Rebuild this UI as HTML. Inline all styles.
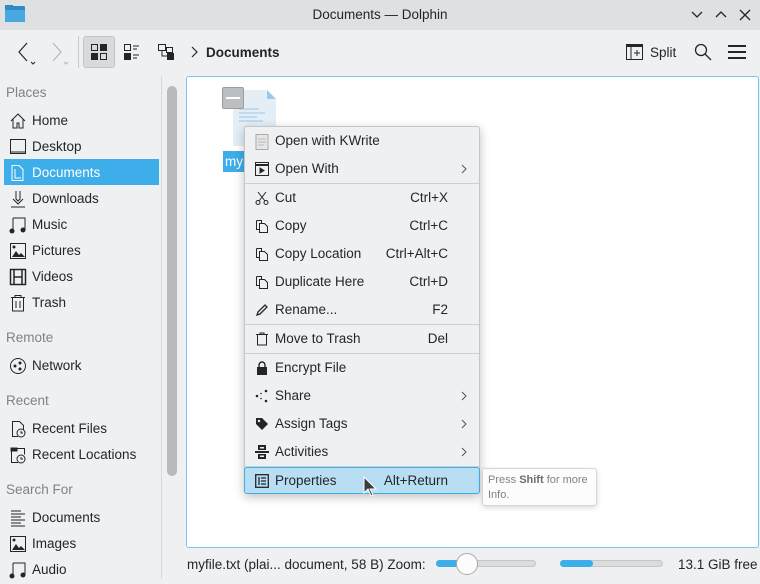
<!DOCTYPE html>
<html><head><meta charset="utf-8"><style>
*{margin:0;padding:0;box-sizing:border-box}
body{width:760px;height:579px;overflow:hidden;background:#eff0f1;font-family:"Liberation Sans","DejaVu Sans",sans-serif;font-size:13.5px;color:#232629;position:relative}
.a{position:absolute;white-space:nowrap}
.t{position:absolute;left:0;top:0;width:760px;height:30px;background:#dee0e2}
.lbl{color:#7f8386}
.si{position:absolute;left:4px;width:155px;height:26px;line-height:28px;padding-left:28px}
.si svg{position:absolute;left:5px;top:5px}
.menu{position:absolute;left:244px;top:126px;width:236px;height:368px;background:#eff0f1;border:1px solid #c4c6c8;border-radius:3px;box-shadow:0 3px 10px rgba(0,0,0,.25)}
.mi{position:absolute;left:0;width:234px;height:28px;line-height:28px;padding-left:30px}
.mi .k{position:absolute;right:31px;top:0}
.mi .ar{position:absolute;right:12px;top:9px;left:auto}
.mi svg{position:absolute;left:10px;top:7px}
.sep{position:absolute;left:0;width:234px;height:1px;background:#cdd0d2}
</style></head><body>
<div class="t"></div>
<svg class="a" style="left:5px;top:5px" width="20" height="18"><rect x="0" y="1" width="20" height="16" rx="1.5" fill="#2e8bc6"/><rect x="0" y="5" width="20" height="12" fill="#4aa8e0"/><rect x="0" y="0" width="8" height="3" fill="#2e8bc6"/></svg>
<div class="a" style="left:0;width:760px;top:7px;text-align:center;font-size:13.5px">Documents — Dolphin</div>
<svg class="a" style="left:690px;top:8px" width="66" height="14" fill="none" stroke="#232629" stroke-width="1.3"><path d="M2 4l5 5 5-5M26 9l5-5 5 5M50 2l10 10M60 2L50 12"/></svg>
<svg class="a" style="left:15px;top:40px" width="60" height="28" fill="none" stroke="#232629" stroke-width="1.2"><path d="M12 3l-8 9 8 9"/><path d="M16 22l2 2 2-2" stroke-width="1"/><path d="M38 3l8 9-8 9" stroke="#b5b7b9"/><path d="M49 22l2 2 2-2" stroke="#b5b7b9" stroke-width="1"/></svg>
<div class="a" style="left:78px;top:36px;width:1px;height:32px;background:#c7c9cb"></div>
<div class="a" style="left:83px;top:36px;width:32px;height:32px;background:#d8dadc;border:1px solid #c2c4c6;border-radius:3px"></div>
<svg class="a" style="left:91px;top:44px" width="16" height="16"><rect x="0.5" y="0.5" width="6" height="6" fill="none" stroke="#232629"/><rect x="9" y="0" width="7" height="7" fill="#232629"/><rect x="0" y="9" width="7" height="7" fill="#232629"/><rect x="9.5" y="9.5" width="6" height="6" fill="none" stroke="#232629"/></svg>
<svg class="a" style="left:124px;top:44px" width="16" height="16"><rect x="0.5" y="0.5" width="6" height="6" fill="none" stroke="#232629"/><rect x="0" y="9" width="7" height="7" fill="#232629"/><path d="M9 2h6M9 5h4M9 11h6M9 14h4" stroke="#232629"/></svg>
<svg class="a" style="left:158px;top:44px" width="18" height="16"><rect x="0.5" y="0.5" width="7" height="6" fill="none" stroke="#232629"/><rect x="8.5" y="3.5" width="6" height="5" fill="none" stroke="#232629"/><rect x="9" y="9" width="7" height="7" fill="#232629"/><path d="M4 7v5h5" stroke="#232629" fill="none"/></svg>
<svg class="a" style="left:190px;top:46px" width="8" height="12" fill="none" stroke="#232629" stroke-width="1.2"><path d="M2 1l5 5-5 5"/></svg>
<div class="a" style="left:206px;top:45px;font-weight:bold">Documents</div>
<svg class="a" style="left:626px;top:44px" width="17" height="16" fill="none" stroke="#232629"><rect x="0.5" y="0.5" width="16" height="15"/><rect x="0" y="0" width="17" height="3" fill="#232629" stroke="none"/><path d="M5 3v13M8 9h6M11 6v6"/></svg>
<div class="a" style="left:650px;top:45px">Split</div>
<svg class="a" style="left:694px;top:43px" width="18" height="18" fill="none" stroke="#232629" stroke-width="1.3"><circle cx="7" cy="7" r="5.5"/><path d="M11 11l6 6"/></svg>
<svg class="a" style="left:728px;top:45px" width="18" height="14" fill="#232629"><rect y="0" width="18" height="2"/><rect y="6" width="18" height="2"/><rect y="12" width="18" height="2"/></svg>
<div class="a lbl" style="left:6px;top:85px">Places</div>
<div class="si" style="top:107px"><svg width="18" height="18" fill="none" stroke="#232629"><path d="M2 9L9 2l7 7M4 7v9h4v-5h2v5h4V7"/></svg>Home</div>
<div class="si" style="top:133px"><svg width="18" height="18" fill="none" stroke="#232629"><rect x="1.5" y="1.5" width="15" height="14"/><path d="M1 14h16"/></svg>Desktop</div>
<div class="si" style="top:159px;background:#3daee9;color:#fff"><svg width="18" height="18" fill="none" stroke="#fff"><path d="M3 1.5h7l4 4v11H3z M6 5v9h6"/></svg>Documents</div>
<div class="si" style="top:185px"><svg width="18" height="18" fill="none" stroke="#232629"><path d="M7 1v8l2 2 2-2V1M4 9l5 5 5-5M2 17h14"/></svg>Downloads</div>
<div class="si" style="top:211px"><svg width="18" height="18" fill="#232629"><path d="M4 2h12v12" fill="none" stroke="#232629"/><path d="M4 2v12" stroke="#232629"/><circle cx="3" cy="15" r="2.5"/><circle cx="14" cy="14" r="2.5"/></svg>Music</div>
<div class="si" style="top:237px"><svg width="18" height="18"><rect x="1.5" y="1.5" width="15" height="15" fill="none" stroke="#232629"/><path d="M3 15l4-6 3 4 2-2 4 4z" fill="#232629"/><circle cx="5" cy="5" r="1.5" fill="#232629"/></svg>Pictures</div>
<div class="si" style="top:263px"><svg width="18" height="18" fill="none" stroke="#232629" stroke-width="1.5"><rect x="1.5" y="1.5" width="15" height="15"/><path d="M5 1v16M13 1v16M5 9h8"/></svg>Videos</div>
<div class="si" style="top:289px"><svg width="18" height="18" fill="none" stroke="#232629"><path d="M2 3.5h14M6 3.5V1.5h6v2M3.5 4v13h11V4M7 7v7M11 7v7"/></svg>Trash</div>
<div class="a lbl" style="left:6px;top:330px">Remote</div>
<div class="si" style="top:352px"><svg width="18" height="18" fill="none" stroke="#232629"><circle cx="9" cy="9" r="7.5"/><circle cx="6" cy="9" r="1" fill="#232629"/><circle cx="11" cy="6" r="1" fill="#232629"/><circle cx="11" cy="12" r="1" fill="#232629"/></svg>Network</div>
<div class="a lbl" style="left:6px;top:393px">Recent</div>
<div class="si" style="top:415px"><svg width="18" height="18" fill="none" stroke="#232629"><path d="M9 16.5H3.5v-15h7l4 4v4"/><circle cx="12" cy="13" r="4"/><path d="M12 11v2h2"/></svg>Recent Files</div>
<div class="si" style="top:441px"><svg width="18" height="18" fill="none" stroke="#232629"><path d="M9 16.5H2.5v-14h13v6"/><rect x="2" y="2" width="6" height="3" fill="#232629"/><circle cx="12" cy="13" r="4"/><path d="M12 11v2h2"/></svg>Recent Locations</div>
<div class="a lbl" style="left:6px;top:482px">Search For</div>
<div class="si" style="top:504px"><svg width="18" height="18" stroke="#232629"><path d="M2 2h10M2 5h14M2 8h10M2 11h14M2 14h10M2 17h14"/></svg>Documents</div>
<div class="si" style="top:530px"><svg width="18" height="18"><rect x="1.5" y="1.5" width="15" height="15" fill="none" stroke="#232629"/><path d="M3 15l4-6 3 4 2-2 4 4z" fill="#232629"/><circle cx="5" cy="5" r="1.5" fill="#232629"/></svg>Images</div>
<div class="si" style="top:556px"><svg width="18" height="18" fill="#232629"><path d="M4 2h12v12" fill="none" stroke="#232629"/><path d="M4 2v12" stroke="#232629"/><circle cx="3" cy="15" r="2.5"/><circle cx="14" cy="14" r="2.5"/></svg>Audio</div>
<div class="a" style="left:161px;top:76px;width:1px;height:503px;background:#d6d8da"></div>
<div class="a" style="left:167px;top:86px;width:10px;height:390px;background:#b8babc;border-radius:5px"></div>
<div class="a" style="left:186px;top:76px;width:573px;height:472px;background:#fff;border:1px solid #7fc4e6;border-radius:3px"></div>
<svg class="a" style="left:229px;top:89px" width="48" height="58"><path d="M4 1h34l9 9v47H4z" fill="#e4eef6"/><path d="M38 1l9 9h-9z" fill="#9ccbea"/><path d="M10 20h20M10 24h26M10 28h18M10 32h24" stroke="#9fc5e4"/></svg>
<div class="a" style="left:222px;top:87px;width:22px;height:22px;background:#bcbfc1;border:1px solid #9a9da0;border-radius:2px"></div>
<div class="a" style="left:226px;top:97px;width:14px;height:2px;background:#fff"></div>
<div class="a" style="left:223px;top:151px;width:24px;height:21px;background:#3daee9;color:#fff;line-height:22px;padding-left:2px">my</div>
<div class="menu">
<div class="mi" style="top:0"><svg width="14" height="16"><rect x="1" y="0.5" width="12" height="15" fill="#e6e6e6" stroke="#aaa"/><path d="M3 5h8M3 8h8M3 11h6" stroke="#bbb"/></svg>Open with KWrite</div>
<div class="mi" style="top:28px"><svg width="14" height="14" fill="none" stroke="#232629"><rect x="0.5" y="0.5" width="13" height="13"/><path d="M0 3h14" stroke-width="2"/><path d="M5 6l4 2.5-4 2.5z" fill="#232629"/></svg>Open With<svg class="ar" width="6" height="10" fill="none" stroke="#555"><path d="M1 1l4 4-4 4"/></svg></div>
<div class="sep" style="top:56px"></div>
<div class="mi" style="top:57px"><svg width="14" height="14" fill="none" stroke="#232629"><path d="M3 1l7 9M11 1l-7 9"/><circle cx="3" cy="11.5" r="2"/><circle cx="11" cy="11.5" r="2"/></svg>Cut<span class="k">Ctrl+X</span></div>
<div class="mi" style="top:85px"><svg width="14" height="14" fill="none" stroke="#232629"><path d="M1.5 1.5h5v3M4.5 4.5h5l3 3v6h-8z"/><path d="M1.5 1.5v9h3"/></svg>Copy<span class="k">Ctrl+C</span></div>
<div class="mi" style="top:113px"><svg width="14" height="14" fill="none" stroke="#232629"><path d="M1.5 1.5h5v3M4.5 4.5h5l3 3v6h-8z"/><path d="M1.5 1.5v9h3"/></svg>Copy Location<span class="k">Ctrl+Alt+C</span></div>
<div class="mi" style="top:141px"><svg width="14" height="14" fill="none" stroke="#232629"><path d="M1.5 1.5h5v3M4.5 4.5h5l3 3v6h-8z"/><path d="M1.5 1.5v9h3"/></svg>Duplicate Here<span class="k">Ctrl+D</span></div>
<div class="mi" style="top:169px"><svg width="14" height="14" fill="none" stroke="#232629" stroke-width="1.3"><path d="M2 12l1-3 7-7 2 2-7 7z"/></svg>Rename...<span class="k">F2</span></div>
<div class="sep" style="top:197px"></div>
<div class="mi" style="top:198px"><svg width="14" height="14" fill="none" stroke="#232629"><path d="M1 2.5h12M5 2.5V1h4v1.5M2.5 3v10h9V3"/></svg>Move to Trash<span class="k">Del</span></div>
<div class="sep" style="top:226px"></div>
<div class="mi" style="top:227px"><svg width="14" height="14"><path d="M4 6V4a3 3 0 016 0v2" fill="none" stroke="#232629" stroke-width="1.4"/><rect x="2" y="6" width="10" height="8" fill="#232629"/></svg>Encrypt File</div>
<div class="mi" style="top:255px"><svg width="14" height="14" fill="#232629"><circle cx="2" cy="7" r="1.3"/><circle cx="11" cy="2" r="1.3"/><circle cx="11" cy="12" r="1.3"/><circle cx="6" cy="4.5" r=".8"/><circle cx="6" cy="9.5" r=".8"/></svg>Share<svg class="ar" width="6" height="10" fill="none" stroke="#555"><path d="M1 1l4 4-4 4"/></svg></div>
<div class="mi" style="top:283px"><svg width="14" height="14"><path d="M1 1h6l6 6-6 6-6-6z" fill="#232629"/><circle cx="4" cy="4" r="1.2" fill="#eff0f1"/></svg>Assign Tags<svg class="ar" width="6" height="10" fill="none" stroke="#555"><path d="M1 1l4 4-4 4"/></svg></div>
<div class="mi" style="top:311px"><svg width="14" height="14" fill="#232629"><rect x="3" y="0" width="8" height="5"/><rect x="0" y="6" width="14" height="2"/><rect x="3" y="9" width="8" height="5"/><rect x="5" y="2" width="4" height="1.5" fill="#eff0f1"/><rect x="5" y="10.5" width="4" height="1.5" fill="#eff0f1"/></svg>Activities<svg class="ar" width="6" height="10" fill="none" stroke="#555"><path d="M1 1l4 4-4 4"/></svg></div>
<div class="sep" style="top:339px"></div>
<div class="mi" style="top:340px;height:27px;left:-1px;width:236px;background:#b8def3;border:1px solid #3daee9;border-radius:3px;line-height:25px"><svg width="14" height="14" style="top:6px;left:10px" fill="none" stroke="#232629" stroke-width="1.3"><rect x="0.7" y="0.7" width="12.6" height="12.6"/><path d="M4 3v8M6 4h5M6 7h5M6 10h5"/></svg>Properties<span class="k" style="right:31px">Alt+Return</span></div>
</div>
<svg class="a" style="left:363px;top:476px" width="14" height="22"><path d="M1 1v16l4-4 3 7 2-1-3-6h6z" fill="#3a3d40" stroke="#fff" stroke-width="1"/></svg>
<div class="a" style="left:482px;top:468px;width:115px;height:38px;background:#fcfcfc;border:1px solid #d4d6d8;border-radius:3px;box-shadow:0 2px 6px rgba(0,0,0,.15);font-size:11px;color:#7f8386;padding:4px 5px;line-height:15px;white-space:normal">Press <b style="color:#6b6e71">Shift</b> for more Info.</div>
<div class="a" style="left:187px;top:557px">myfile.txt (plai... document, 58 B) Zoom:</div>
<div class="a" style="left:436px;top:560px;width:100px;height:7px;background:#dadcde;border:1px solid #c4c6c8;border-radius:4px"></div>
<div class="a" style="left:436px;top:560px;width:30px;height:7px;background:#3daee9;border-radius:4px"></div>
<div class="a" style="left:456px;top:553px;width:22px;height:22px;background:#fcfcfc;border:1px solid #a8abad;border-radius:11px"></div>
<div class="a" style="left:560px;top:560px;width:103px;height:7px;background:#dadcde;border:1px solid #c4c6c8;border-radius:4px"></div>
<div class="a" style="left:560px;top:560px;width:33px;height:7px;background:#3daee9;border-radius:4px"></div>
<div class="a" style="left:678px;top:557px">13.1 GiB free</div>
</body></html>
